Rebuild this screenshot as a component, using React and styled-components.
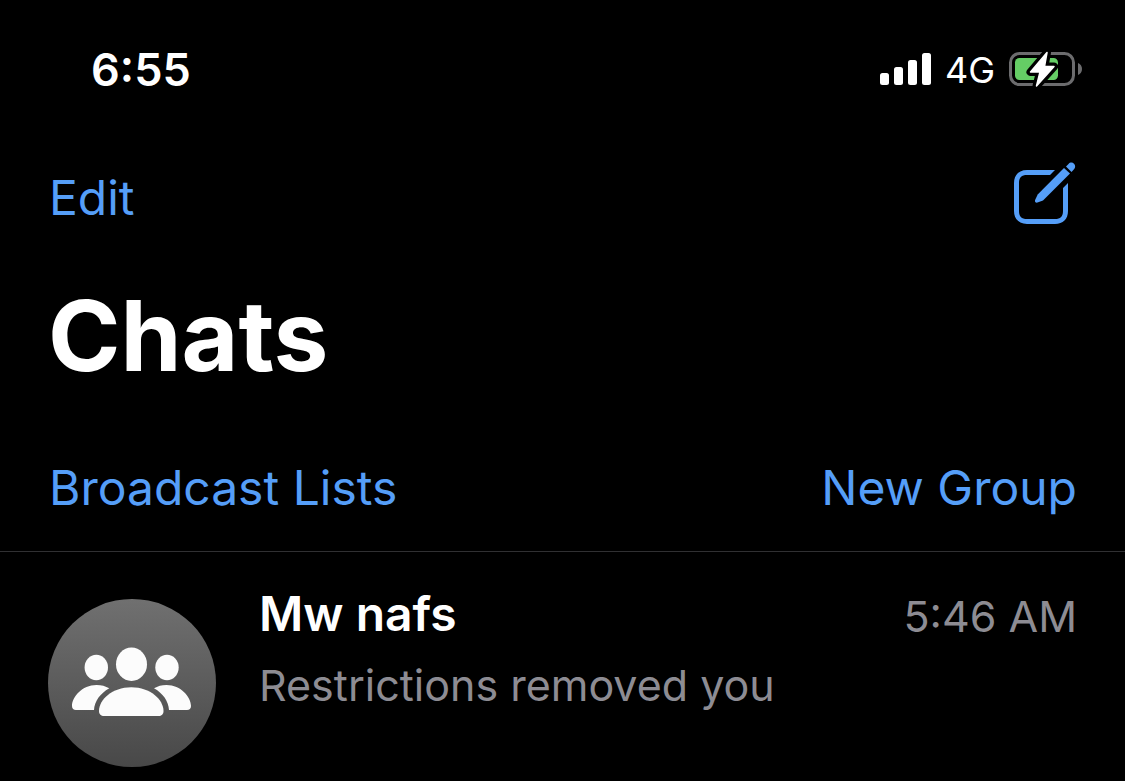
import React from "react";
import styled, { createGlobalStyle } from "styled-components";

const GlobalStyle = createGlobalStyle`
  *, *::before, *::after { box-sizing: border-box; }
  html { background: #000; }
  body {
    margin: 0;
    background: #000;
    color: #fff;
    font-family: Inter, "Liberation Sans", sans-serif;
  }
  svg { display: block; flex: none; }
`;

const Screen = styled.div`
  display: flex;
  flex-direction: column;
  min-height: 100vh;
  overflow: hidden;
`;

const StatusBar = styled.header`
  display: flex;
  align-items: center;
  justify-content: space-between;
  height: 140px;
  padding: 0 43px 0 91px;
`;

const Clock = styled.time`
  font-size: 45px;
  font-weight: 600;
  line-height: 60px;
`;

const StatusIcons = styled.div`
  display: flex;
  align-items: center;
  gap: 14px;
  padding-bottom: 2px;
`;

const Network = styled.span`
  padding-top: 2px;
  font-size: 36px;
  font-weight: 400;
  line-height: 40px;
`;

const Toolbar = styled.nav`
  display: flex;
  align-items: center;
  justify-content: space-between;
  padding: 0 48px 0 49px;
  height: ${(p) => p.$height};
`;

const TextButton = styled.button`
  border: 0;
  padding: 0;
  background: none;
  color: #559ef8;
  font-family: inherit;
  font-size: 48px;
  font-weight: 400;
  line-height: 60px;
  cursor: pointer;
`;

const IconButton = styled(TextButton)`
  padding-bottom: 10px;
`;

const Title = styled.h1`
  margin: 20px 0 29px;
  padding: 0 48px;
  font-size: 98px;
  font-weight: 700;
  line-height: 120px;
`;

const ChatList = styled.ul`
  margin: 0;
  padding: 0;
  list-style: none;
  border-top: 1px solid #303032;
`;

const ChatRow = styled.li`
  display: flex;
  gap: 43px;
  padding: 32px 48px 14px;
`;

const Avatar = styled.div`
  flex: none;
  width: 168px;
  height: 168px;
  margin-top: 15px;
  border-radius: 50%;
  background: linear-gradient(#707070, #484848);
`;

const ChatBody = styled.div`
  flex: 1;
  min-width: 0;
`;

const ChatHead = styled.div`
  display: flex;
  align-items: flex-start;
  justify-content: space-between;
`;

const ChatName = styled.h2`
  margin: 0;
  font-size: 48px;
  font-weight: 600;
  line-height: 60px;
`;

const ChatTime = styled.time`
  color: #8d8c93;
  font-size: 43px;
  line-height: 64px;
`;

const Preview = styled.p`
  margin: 7px 0 0;
  color: #8d8c93;
  font-size: 43px;
  line-height: 60px;
`;

const SignalIcon = () => (
  <svg width="51" height="32" viewBox="0 0 51 32" fill="#fff" aria-hidden="true">
    <rect x="0" y="20" width="9" height="12" rx="2.5" />
    <rect x="14" y="14" width="9" height="18" rx="2.5" />
    <rect x="28" y="7" width="9" height="25" rx="2.5" />
    <rect x="42" y="0" width="9" height="32" rx="2.5" />
  </svg>
);

const BatteryIcon = () => (
  <svg width="73" height="34" viewBox="0 0 73 34" overflow="visible" aria-hidden="true">
    <rect x="1.5" y="1.5" width="63" height="31" rx="9" fill="none" stroke="#6c6c6e" strokeWidth="3" />
    <path d="M69 11C71.500 12 73 14.300 73 17S71.500 22 69 23Z" fill="#6c6c6e" />
    <rect x="6" y="6" width="43" height="22" rx="4.500" fill="#65cd65" />
    <path
      d="M38 .5L21.500 20H31L27.500 34L45 14.500H35.500Z"
      fill="#000"
      stroke="#000"
      strokeWidth="8"
      strokeLinejoin="round"
    />
    <path
      d="M38 .5L21.500 20H31L27.500 34L45 14.500H35.500Z"
      fill="#fff"
      stroke="#fff"
      strokeWidth="1.500"
      strokeLinejoin="round"
    />
  </svg>
);

const ComposeIcon = () => (
  <svg width="63" height="62" viewBox="0 0 63 62" fill="#559ef8" aria-hidden="true">
    <path d="M41 8H13C5 8 0 13 0 21V49C0 57 5 62 13 62H41C49 62 54 57 54 49V21L49 26V49C49 54.500 46.500 57 41 57H13C7.500 57 5 54.500 5 49V21C5 15.500 7.500 13 13 13H36Z" />
    <path d="M50 6L56 11.500L29 38.500L23.500 40.500C22 41 20.500 40 21 38.300L23.700 32.500Z" />
    <path d="M52 4.500L54.500 2C56 .2 58.500 .1 60 1.700C61.600 3.300 61.500 5.500 60 7.200L57.500 10Z" />
  </svg>
);

const GroupIcon = () => (
  <svg width="168" height="168" viewBox="0 0 168 168" fill="#fcfcfc" aria-hidden="true">
    <ellipse cx="83.500" cy="65.300" rx="15.500" ry="16.700" />
    <ellipse cx="48.300" cy="68.500" rx="11.700" ry="12.700" />
    <ellipse cx="119" cy="68.500" rx="11.700" ry="12.700" />
    <path d="M51 112C51 101 64 88.300 83.300 88.300S115.500 101 115.500 112C115.500 115.500 113.500 117 110.500 117H56C53 117 51 115.500 51 112Z" />
    <path d="M61.300 89.300C52 94.500 46.500 102.500 46 111H28C25.500 111 24 109.500 24 107C24 98 34 86 48.500 86C53.500 86 57.500 87.200 61.300 89.300Z" />
    <path d="M106 89.300C115.300 94.500 120.500 102.500 121 111H139C141.500 111 143 109.500 143 107C143 98 133 86 118.500 86C113.500 86 109.800 87.200 106 89.300Z" />
  </svg>
);

export default function App() {
  return (
    <>
      <GlobalStyle />
      <Screen>
        <StatusBar>
          <Clock>6:55</Clock>
          <StatusIcons>
            <SignalIcon />
            <Network>4G</Network>
            <BatteryIcon />
          </StatusIcons>
        </StatusBar>
        <Toolbar $height="116px">
          <TextButton type="button">Edit</TextButton>
          <IconButton type="button" aria-label="New chat">
            <ComposeIcon />
          </IconButton>
        </Toolbar>
        <Title>Chats</Title>
        <Toolbar $height="126px">
          <TextButton type="button">Broadcast Lists</TextButton>
          <TextButton type="button">New Group</TextButton>
        </Toolbar>
        <ChatList>
          <ChatRow>
            <Avatar>
              <GroupIcon />
            </Avatar>
            <ChatBody>
              <ChatHead>
                <ChatName>Mw nafs</ChatName>
                <ChatTime>5:46 AM</ChatTime>
              </ChatHead>
              <Preview>Restrictions removed you</Preview>
            </ChatBody>
          </ChatRow>
        </ChatList>
      </Screen>
    </>
  );
}
